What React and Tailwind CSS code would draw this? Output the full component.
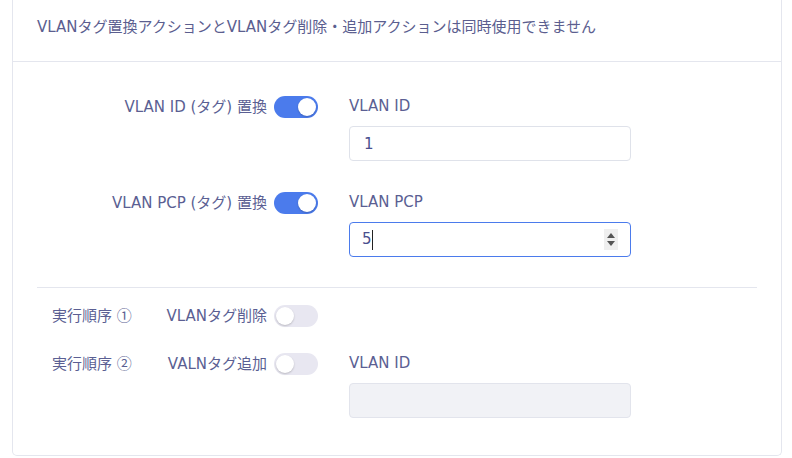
import React from 'react';

const Toggle = ({ on }) => (
  <div
    className={
      'relative h-[22px] w-[44px] shrink-0 rounded-full ' + (on ? 'bg-[#4b7bec]' : 'bg-[#e8e7f1]')
    }
  >
    <div
      className={
        'absolute top-[2px] h-[18px] w-[18px] rounded-full bg-white shadow-[0_1px_2px_rgba(0,0,0,0.2)] ' +
        (on ? 'left-[24px]' : 'left-[2px]')
      }
    />
  </div>
);

const FieldLabel = ({ children }) => (
  <div className="h-[22px] leading-[22px] text-[#5b5f93]">{children}</div>
);

const Circled = ({ children }) => (
  <span style={{ fontFamily: '"Noto Sans CJK JP", sans-serif' }}>{children}</span>
);

const App = () => {
  return (
    <div
      className="h-[458px] w-[792px] overflow-hidden bg-white pl-[12px] pr-[10px] text-[15px]"
      style={{ fontFamily: '"DejaVu Sans", "Noto Sans CJK JP", sans-serif' }}
    >
      <div className="rounded-b-[5px] border border-t-0 border-[#e4e6ee] bg-white">
        {/* header */}
        <div className="h-[62px] border-b border-[#e4e6ee] px-[24px] pt-[17px] leading-[20px] text-[#5b5e8f]">
          VLANタグ置換アクションとVLANタグ削除・追加アクションは同時使用できません
        </div>

        <div className="px-[24px] pt-[33px] pb-[37px]">
          {/* VLAN ID replace */}
          <div className="flex items-start">
            <div className="flex w-[281px] items-center justify-end gap-[7px] pt-[1px]">
              <span className="leading-[22px] text-[#5b5f93]">VLAN ID (タグ) 置換</span>
              <Toggle on />
            </div>
            <div className="ml-[31px] w-[282px]">
              <FieldLabel>VLAN ID</FieldLabel>
              <input
                readOnly
                value="1"
                className="mt-[9px] h-[35px] w-full rounded-[4px] border border-[#dfe2ea] bg-white px-[14px] text-[15px] text-[#4a4f8e] outline-none"
              />
            </div>
          </div>

          {/* VLAN PCP replace */}
          <div className="mt-[30px] flex items-start">
            <div className="flex w-[281px] items-center justify-end gap-[7px] pt-[1px]">
              <span className="leading-[22px] text-[#5b5f93]">VLAN PCP (タグ) 置換</span>
              <Toggle on />
            </div>
            <div className="ml-[31px] w-[282px]">
              <FieldLabel>VLAN PCP</FieldLabel>
              <div className="relative mt-[9px] flex h-[35px] w-full items-center rounded-[4px] border border-[#4b7bec] bg-white px-[12px] text-[#4a4f8e]">
                <span className="leading-none">5</span>
                <span className="h-[20px] w-px bg-[#222]" />
                <div className="absolute right-[12px] top-[6px] flex h-[21px] w-[14px] flex-col items-center justify-center gap-[3px] bg-[#efefef]">
                  <div className="h-0 w-0 border-x-[4px] border-b-[5px] border-x-transparent border-b-[#555]" />
                  <div className="h-0 w-0 border-x-[4px] border-t-[5px] border-x-transparent border-t-[#555]" />
                </div>
              </div>
            </div>
          </div>

          <div className="mt-[30px] border-t border-[#e4e6ee]" />

          {/* order 1 */}
          <div className="mt-[16px] flex items-start">
            <div className="flex w-[281px] items-center pl-[15px]">
              <span className="leading-[22px] text-[#5b5f93]">
                実行順序 <Circled>①</Circled>
              </span>
              <div className="ml-auto flex items-center gap-[7px]">
                <span className="leading-[22px] text-[#5b5f93]">VLANタグ削除</span>
                <Toggle />
              </div>
            </div>
          </div>

          {/* order 2 */}
          <div className="mt-[25px] flex items-start">
            <div className="flex w-[281px] items-center pl-[15px]">
              <span className="leading-[22px] text-[#5b5f93]">
                実行順序 <Circled>②</Circled>
              </span>
              <div className="ml-auto flex items-center gap-[7px]">
                <span className="leading-[22px] text-[#5b5f93]">VALNタグ追加</span>
                <Toggle />
              </div>
            </div>
            <div className="ml-[31px] w-[282px]">
              <FieldLabel>VLAN ID</FieldLabel>
              <input
                disabled
                className="mt-[9px] h-[35px] w-full rounded-[4px] border border-[#e2e4ec] bg-[#f1f2f6] px-[14px]"
              />
            </div>
          </div>
        </div>
      </div>
    </div>
  );
};

export default App;
